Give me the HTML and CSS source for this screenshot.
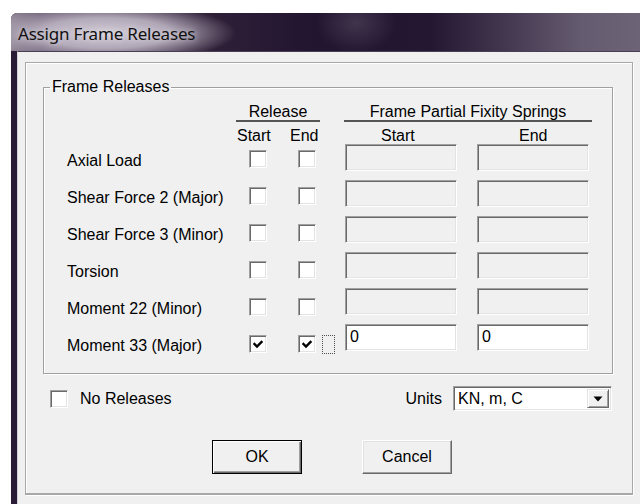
FILE: index.html
```html
<!DOCTYPE html>
<html lang="en">
<head>
<meta charset="utf-8">
<title>Assign Frame Releases</title>
<link rel="stylesheet" href="styles.css">
</head>
<body>
<div class="window">
  <div class="titlebar"><span class="title">Assign Frame Releases</span></div>
  <div class="client">
    <div class="panel">
      <fieldset class="group">
        <legend>Frame Releases</legend>
        <div class="group-body">
          <div class="release">
            <div class="release-head"><div class="hdr">Release</div></div>
            <div class="release-sub"><span class="sub-start">Start</span><span class="sub-end">End</span></div>
            <div class="release-rows">
              <div class="lbl">Axial Load</div>
              <div class="cell"><span class="cb"></span></div>
              <div class="cell"><span class="cb"></span></div>
              <div class="cell"></div>

              <div class="lbl">Shear Force 2 (Major)</div>
              <div class="cell"><span class="cb"></span></div>
              <div class="cell"><span class="cb"></span></div>
              <div class="cell"></div>

              <div class="lbl">Shear Force 3 (Minor)</div>
              <div class="cell"><span class="cb"></span></div>
              <div class="cell"><span class="cb"></span></div>
              <div class="cell"></div>

              <div class="lbl">Torsion</div>
              <div class="cell"><span class="cb"></span></div>
              <div class="cell"><span class="cb"></span></div>
              <div class="cell"></div>

              <div class="lbl">Moment 22 (Minor)</div>
              <div class="cell"><span class="cb"></span></div>
              <div class="cell"><span class="cb"></span></div>
              <div class="cell"></div>

              <div class="lbl">Moment 33 (Major)</div>
              <div class="cell"><span class="cb"><svg class="tick" viewBox="0 0 16 16"><polyline points="4.5,8 7,10.5 11.5,6"/></svg></span></div>
              <div class="cell"><span class="cb"><svg class="tick" viewBox="0 0 16 16"><polyline points="4.5,8 7,10.5 11.5,6"/></svg></span></div>
              <div class="cell"><span class="focus-rect"></span></div>
            </div>
          </div>

          <div class="springs">
            <div class="hdr springs-hdr">Frame Partial Fixity Springs</div>
            <div class="springs-sub"><span class="fs-start">Start</span><span class="fs-end">End</span></div>
            <div class="springs-rows">
              <span class="field off"></span><span class="field off"></span>
              <span class="field off"></span><span class="field off"></span>
              <span class="field off"></span><span class="field off"></span>
              <span class="field off"></span><span class="field off"></span>
              <span class="field off"></span><span class="field off"></span>
              <span class="field on">0</span><span class="field on">0</span>
            </div>
          </div>
        </div>
      </fieldset>

      <div class="options">
        <span class="cb"></span>
        <span class="opt-label">No Releases</span>
        <span class="units-label">Units</span>
        <div class="select">
          <span class="select-value">KN, m, C</span>
          <span class="select-btn"><svg viewBox="0 0 10 6" class="arrow"><polygon points="0.5,0.5 9.5,0.5 5,5.5"/></svg></span>
        </div>
      </div>

      <div class="buttons">
        <button class="btn default" type="button">OK</button>
        <button class="btn" type="button">Cancel</button>
      </div>
    </div>
  </div>
</div>
</body>
</html>
```

FILE: styles.css
```css
html, body {
  margin: 0;
  padding: 0;
}

body {
  width: 640px;
  height: 504px;
  overflow: hidden;
  background: #ffffff;
  font-family: "Liberation Sans", Arial, sans-serif;
  font-size: 16px;
  color: #000;
}

/* ---- window frame ---- */
.window {
  margin: 13px 0 0 11px;
  width: 629px;
  height: 491px;
  display: flex;
  flex-direction: column;
  background: #2a1b36;
  border-top-left-radius: 6px;
  overflow: hidden;
}

.titlebar {
  height: 38px;
  flex: none;
  display: flex;
  align-items: center;
  padding-left: 7px;
  background:
    radial-gradient(ellipse 130px 30px at 95px 20px, rgba(214, 208, 218, 0.97) 0%, rgba(196, 188, 202, 0.85) 50%, rgba(120, 106, 128, 0) 100%),
    radial-gradient(ellipse 40px 30px at 345px 10px, rgba(120, 110, 130, 0.35), rgba(0, 0, 0, 0) 100%),
    linear-gradient(90deg, #8a8090 0px, #5c4d66 30px, #2f2038 200px, #221530 300px, #241732 420px, #463a52 500px, #655b70 570px, #6c6376 629px);
}

.title {
  font-family: "Noto Sans", "Open Sans", sans-serif;
  font-size: 17px;
  color: #101010;
  letter-spacing: -0.2px;
  text-shadow: 0 0 6px rgba(235, 232, 238, 0.9);
  position: relative;
  top: 1px;
}

.client {
  flex: 1;
  margin-left: 6px;
  background: #f0f0f0;
  border-top: 1px solid #4a3e55;
  border-left: 1px solid #d4d0d8;
  padding: 10px 0 0 7px;
}

/* ---- etched outer panel ---- */
.panel {
  box-sizing: border-box;
  width: 608px;
  height: 433px;
  border: 1px solid #a8a8a8;
  border-bottom-width: 2px;
  box-shadow: inset 1px 1px 0 #ffffff, 1px 1px 0 #ffffff;
  padding: 15px 0 0 17px;
}

/* ---- group box ---- */
.group {
  box-sizing: border-box;
  margin: 0;
  padding: 0;
  width: 570px;
  height: 296px;
  border: 1px solid #a0a0a0;
  box-shadow: inset 1px 1px 0 #ffffff, 1px 1px 0 #ffffff;
  min-width: 0;
}

.group legend {
  margin-left: 6px;
  padding: 0 2px;
  line-height: 18px;
}

.group-body {
  display: flex;
  padding: 7px 0 0 23px;
}

.hdr {
  line-height: 17px;
  height: 17px;
  text-align: center;
  border-bottom: 2px solid #555555;
}

/* ---- release check boxes ---- */
.release {
  width: 277px;
}

.release-head {
  padding-left: 169px;
}

.release-head .hdr {
  width: 84px;
}

.release-sub {
  display: flex;
  margin-top: 5px;
  height: 17px;
  line-height: 17px;
  padding-left: 170px;
}

.sub-start {
  width: 53px;
}

.release-rows {
  display: grid;
  grid-template-columns: 169px 49px 35px 24px;
  grid-auto-rows: 37px;
}

.lbl {
  line-height: 18px;
  padding-top: 8px;
}

.cell {
  padding: 6px 0 0 13px;
}

.cell:nth-child(4n) {
  padding-left: 2px;
}

.cb {
  box-sizing: border-box;
  display: inline-flex;
  align-items: center;
  justify-content: center;
  width: 18px;
  height: 18px;
  background: #ffffff;
  border: 1px solid;
  border-color: #a0a0a0 #ffffff #ffffff #a0a0a0;
  box-shadow: inset 1px 1px 0 #696969, inset -1px -1px 0 #e3e3e3;
  vertical-align: top;
}

.tick {
  width: 16px;
  height: 16px;
  fill: none;
  stroke: #000;
  stroke-width: 2.4;
  stroke-linecap: square;
}

.focus-rect {
  display: block;
  box-sizing: border-box;
  width: 13px;
  height: 19px;
  border: 1px dotted #505050;
}

/* ---- spring edit fields ---- */
.springs {
  width: 248px;
}

.springs-sub {
  display: flex;
  margin-top: 5px;
  height: 17px;
  line-height: 17px;
  padding-left: 37px;
}

.fs-start {
  width: 138px;
}

.springs-rows {
  display: grid;
  grid-template-columns: 112px 112px;
  column-gap: 20px;
  row-gap: 9px;
  padding-left: 1px;
}

.field {
  box-sizing: border-box;
  display: block;
  height: 27px;
  border: 1px solid;
  border-color: #a0a0a0 #ffffff #ffffff #a0a0a0;
  box-shadow: inset 1px 1px 0 #696969, inset -1px -1px 0 #e3e3e3;
  padding: 3px 0 0 4px;
  line-height: 18px;
}

.field.off {
  background: #f0f0f0;
}

.field.on {
  background: #ffffff;
}

/* ---- options row ---- */
.options {
  display: flex;
  align-items: center;
  width: 570px;
  height: 25px;
  margin-top: 12px;
}

.options > .cb {
  margin-left: 7px;
}

.opt-label {
  margin-left: 12px;
}

.units-label {
  margin-left: auto;
  margin-right: 11px;
}

.select {
  box-sizing: border-box;
  display: flex;
  width: 159px;
  height: 25px;
  margin-right: 1px;
  background: #ffffff;
  border: 1px solid;
  border-color: #a0a0a0 #ffffff #ffffff #a0a0a0;
  box-shadow: inset 1px 1px 0 #696969, inset -1px -1px 0 #e3e3e3;
  padding: 2px;
}

.select-value {
  flex: 1;
  line-height: 19px;
  padding-left: 2px;
}

.select-btn {
  box-sizing: border-box;
  width: 22px;
  height: 19px;
  display: flex;
  align-items: center;
  justify-content: center;
  background: #f0f0f0;
  border: 1px solid;
  border-color: #e3e3e3 #696969 #696969 #e3e3e3;
  box-shadow: inset 1px 1px 0 #ffffff, inset -1px -1px 0 #a0a0a0;
}

.arrow {
  width: 10px;
  height: 6px;
  fill: #000;
}

/* ---- push buttons ---- */
.buttons {
  display: flex;
  gap: 60px;
  padding-left: 169px;
  margin-top: 29px;
}

.btn {
  box-sizing: border-box;
  width: 90px;
  height: 34px;
  margin: 0;
  padding: 0;
  font: inherit;
  color: #000;
  background: #f0f0f0;
  border: 1px solid;
  border-color: #ffffff #696969 #696969 #ffffff;
  box-shadow: inset -1px -1px 0 #a0a0a0, inset 1px 1px 0 #e3e3e3;
}

.btn.default {
  border-color: #000000;
  box-shadow: inset 1px 1px 0 #ffffff, inset -1px -1px 0 #696969, inset -2px -2px 0 #a0a0a0;
}
```
